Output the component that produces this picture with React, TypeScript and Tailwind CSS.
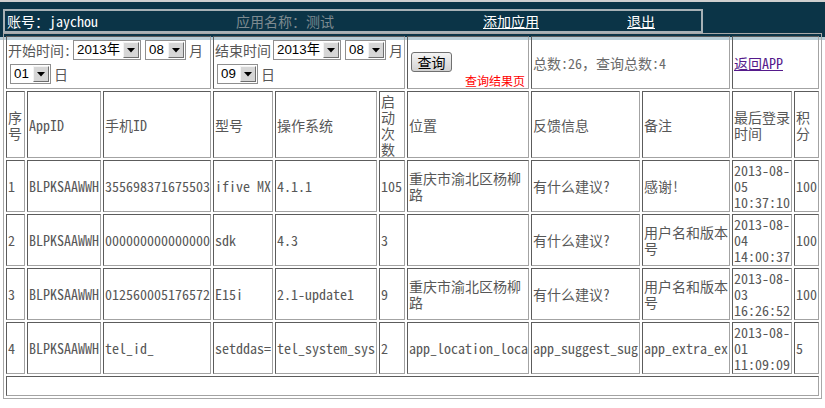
import React from "react";

const F = "font-['Noto_Sans_Mono_CJK_SC','Noto_Sans_CJK_SC',monospace]";

function C({ className = "", children }: { className?: string; children?: React.ReactNode }) {
  return (
    <div
      className={`flex items-center overflow-hidden border border-t-[#5c5c5c] border-l-[#5c5c5c] border-r-[#a3a3a3] border-b-[#a3a3a3] p-px ${className}`}
    >
      {children}
    </div>
  );
}

function Sel({ w, v }: { w: string; v: string }) {
  return (
    <div className={`flex h-[20px] items-center border border-[#8f8f8f] bg-white ${w}`}>
      <span className="flex-1 pl-[3px] font-['Liberation_Sans','Noto_Sans_CJK_SC',sans-serif] text-[13.33px] leading-[16px] text-black">
        {v}
      </span>
      <span className="mr-px flex h-[16px] w-[16px] items-center justify-center border border-t-[#f4f4f4] border-l-[#f4f4f4] border-r-[#6e6e6e] border-b-[#6e6e6e] bg-[#d6d6d6]">
        <svg width="8" height="5" viewBox="0 0 8 5">
          <path d="M0 0 H8 L4 4.5 Z" fill="#000" />
        </svg>
      </span>
    </div>
  );
}

const rows = [
  {
    n: "1",
    app: "BLPKSAAWWH",
    phone: "355698371675503",
    model: "ifive MX",
    os: "4.1.1",
    cnt: "105",
    loc: "重庆市渝北区杨柳路",
    fb: "有什么建议?",
    note: "感谢!",
    t: ["2013-08-", "05", "10:37:10"],
    pts: "100",
  },
  {
    n: "2",
    app: "BLPKSAAWWH",
    phone: "000000000000000",
    model: "sdk",
    os: "4.3",
    cnt: "3",
    loc: "",
    fb: "有什么建议?",
    note: "用户名和版本号",
    t: ["2013-08-", "04", "14:00:37"],
    pts: "100",
  },
  {
    n: "3",
    app: "BLPKSAAWWH",
    phone: "012560005176572",
    model: "E15i",
    os: "2.1-update1",
    cnt: "9",
    loc: "重庆市渝北区杨柳路",
    fb: "有什么建议?",
    note: "用户名和版本号",
    t: ["2013-08-", "03", "16:26:52"],
    pts: "100",
  },
  {
    n: "4",
    app: "BLPKSAAWWH",
    phone: "tel_id_",
    model: "setddas=",
    os: "tel_system_sys",
    cnt: "2",
    loc: "app_location_loca",
    fb: "app_suggest_sug",
    note: "app_extra_ex",
    t: ["2013-08-", "01", "11:09:09"],
    pts: "5",
  },
];

function T({ children }: { children?: React.ReactNode }) {
  return <div className="min-w-0 break-all">{children}</div>;
}

function N({ children }: { children?: React.ReactNode }) {
  return <div className="min-w-0 whitespace-nowrap">{children}</div>;
}

export default function App() {
  return (
    <div
      className={`h-[408px] w-[825px] overflow-hidden bg-[linear-gradient(to_bottom,#cfcfcf_0px,#cfcfcf_2px,#0b3447_2px,#0b3447_37px,#b7cdd7_37px,#b7cdd7_40px,#ffffff_40px)] pt-[9px] text-[14px] leading-[16px] ${F}`}
    >
      <div className="ml-[3px] flex h-[24px] w-[700px] items-center border-2 border-[#a7b1b6] pl-[2px]">
        <span className="w-[229px] text-white">账号：jaychou</span>
        <span className="w-[247px] text-[#7d8a90]">应用名称：测试</span>
        <span className="w-[144px] text-white underline">添加应用</span>
        <span className="text-white underline">退出</span>
      </div>

      <div className="ml-[3px] w-[819px] border border-[#a8a8a8] p-[2px] text-[#575757]">
        <div className="grid grid-cols-[19px_74px_108px_60px_102px_26px_122px_109px_88px_60px_25px] grid-rows-[53px_67px_52px_52px_52px_52px_20px] gap-[2px]">
          {/* filter row */}
          <C className="col-span-3 !items-start">
            <div className="flex flex-col">
              <div className="flex h-[24px] items-center">
                <span className="w-[63px]">开始时间:</span>
                <span className="ml-[2px]">
                  <Sel w="w-[68px]" v="2013年" />
                </span>
                <span className="ml-[4px]">
                  <Sel w="w-[41px]" v="08" />
                </span>
                <span className="ml-[3px]">月</span>
              </div>
              <div className="flex h-[24px] items-center">
                <span className="ml-[2px]">
                  <Sel w="w-[41px]" v="01" />
                </span>
                <span className="ml-[3px]">日</span>
              </div>
            </div>
          </C>
          <C className="col-span-3 !items-start">
            <div className="flex flex-col">
              <div className="flex h-[24px] items-center">
                <span className="w-[56px]">结束时间</span>
                <span className="ml-[2px]">
                  <Sel w="w-[68px]" v="2013年" />
                </span>
                <span className="ml-[4px]">
                  <Sel w="w-[41px]" v="08" />
                </span>
                <span className="ml-[3px]">月</span>
              </div>
              <div className="flex h-[24px] items-center">
                <span className="ml-[2px]">
                  <Sel w="w-[41px]" v="09" />
                </span>
                <span className="ml-[3px]">日</span>
              </div>
            </div>
          </C>
          <C className="!items-start">
            <div className="flex w-full flex-col">
              <button className="ml-[2px] mt-[14px] flex h-[20px] w-[41px] items-center justify-center rounded-[3px] border border-[#707070] bg-[linear-gradient(to_bottom,#f4f4f4,#d2d2d2)] text-[14px] leading-[16px] text-black">
                查询
              </button>
              <div className="mt-[2px] pr-[2px] text-right text-[12px] leading-[14px] text-[#ff0000]">
                查询结果页
              </div>
            </div>
          </C>
          <C className="col-span-2">
            <N>
              <span className="text-[#6a6a6a]">总数:26，查询总数:4</span>
            </N>
          </C>
          <C className="col-span-2">
            <N>
              <span className="text-[#551a8b] underline">返回APP</span>
            </N>
          </C>

          {/* header row */}
          <C><T>序号</T></C>
          <C><T>AppID</T></C>
          <C><T>手机ID</T></C>
          <C><T>型号</T></C>
          <C><T>操作系统</T></C>
          <C><T>启动次数</T></C>
          <C><T>位置</T></C>
          <C><T>反馈信息</T></C>
          <C><T>备注</T></C>
          <C><T>最后登录时间</T></C>
          <C><T>积分</T></C>

          {rows.map((r) => (
            <React.Fragment key={r.n}>
              <C><N>{r.n}</N></C>
              <C><N>{r.app}</N></C>
              <C><N>{r.phone}</N></C>
              <C><N>{r.model}</N></C>
              <C><N>{r.os}</N></C>
              <C><N>{r.cnt}</N></C>
              <C>{r.n === "4" ? <N>{r.loc}</N> : <T>{r.loc}</T>}</C>
              <C>{r.n === "4" ? <N>{r.fb}</N> : <T>{r.fb}</T>}</C>
              <C>{r.n === "4" ? <N>{r.note}</N> : <T>{r.note}</T>}</C>
              <C>
                <div className="whitespace-nowrap">
                  {r.t[0]}
                  <br />
                  {r.t[1]}
                  <br />
                  {r.t[2]}
                </div>
              </C>
              <C><N>{r.pts}</N></C>
            </React.Fragment>
          ))}

          <C className="col-span-11" />
        </div>
      </div>
    </div>
  );
}
